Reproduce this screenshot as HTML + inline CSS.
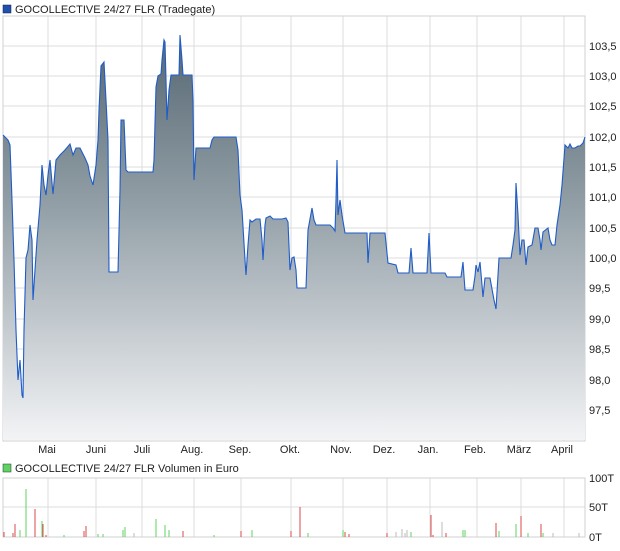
<!DOCTYPE html>
<html><head><meta charset="utf-8"><style>
body{margin:0;background:#fff;width:620px;height:546px;overflow:hidden;font-family:"Liberation Sans",sans-serif}
</style></head><body>
<svg width="620" height="546" viewBox="0 0 620 546" xmlns="http://www.w3.org/2000/svg" font-family="Liberation Sans, sans-serif" font-size="11" fill="#222">
<defs>
<linearGradient id="g" gradientUnits="userSpaceOnUse" x1="0" y1="35" x2="0" y2="441">
<stop offset="0" stop-color="#566772"/>
<stop offset="0.4" stop-color="#8f9ca4"/>
<stop offset="1" stop-color="#f3f4f6"/>
</linearGradient>
</defs>
<rect x="3" y="5" width="8" height="8" fill="#1f4fb0" stroke="#123" stroke-width="0.5"/>
<text x="15" y="13">GOCOLLECTIVE 24/27 FLR (Tradegate)</text>
<g stroke="#dcdcdc" stroke-width="1">
<line x1="48" y1="16" x2="48" y2="441"/><line x1="96" y1="16" x2="96" y2="441"/><line x1="142" y1="16" x2="142" y2="441"/><line x1="194" y1="16" x2="194" y2="441"/><line x1="241" y1="16" x2="241" y2="441"/><line x1="291" y1="16" x2="291" y2="441"/><line x1="343" y1="16" x2="343" y2="441"/><line x1="387" y1="16" x2="387" y2="441"/><line x1="430" y1="16" x2="430" y2="441"/><line x1="477" y1="16" x2="477" y2="441"/><line x1="521" y1="16" x2="521" y2="441"/><line x1="564" y1="16" x2="564" y2="441"/>
<line x1="3" y1="46" x2="585" y2="46"/><line x1="3" y1="76" x2="585" y2="76"/><line x1="3" y1="106" x2="585" y2="106"/><line x1="3" y1="137" x2="585" y2="137"/><line x1="3" y1="167" x2="585" y2="167"/><line x1="3" y1="197" x2="585" y2="197"/><line x1="3" y1="228" x2="585" y2="228"/><line x1="3" y1="258" x2="585" y2="258"/><line x1="3" y1="288" x2="585" y2="288"/><line x1="3" y1="319" x2="585" y2="319"/><line x1="3" y1="349" x2="585" y2="349"/><line x1="3" y1="380" x2="585" y2="380"/><line x1="3" y1="410" x2="585" y2="410"/>
</g>
<rect x="3" y="16" width="582" height="425" fill="none" stroke="#d0d0d0"/>
<path d="M3,135 L8,140 L10,145 L12,200 L14,260 L16,330 L18,380 L20,360 L22,395 L23,398 L24,330 L26,258 L28,250 L30,225 L32,240 L33,300 L35,270 L37,240 L40,205 L42,165 L44,185 L46,195 L48,175 L50,160 L53,194 L56,160 L60,155 L65,150 L70,144 L73,155 L76,148 L80,148 L85,158 L88,165 L90,176 L93,185 L96,165 L98,140 L99,110 L101,66 L104,62 L106,100 L108,140 L109,272 L118,272 L120,190 L121,120 L124,120 L126,170 L128,172 L153,172 L154,160 L156,87 L158,76 L161,74 L162,60 L164,40 L165,42 L166,80 L167,120 L169,90 L171,75 L179,75 L180,35 L182,60 L183,75 L192,75 L193,101 L194,180 L196,148 L210,148 L212,140 L214,137 L236,137 L238,150 L240,195 L242,210 L245,260 L246,275 L248,245 L250,220 L252,222 L256,219 L260,219 L262,240 L263,260 L265,225 L266,218 L270,216 L273,219 L282,219 L286,218 L288,222 L290,270 L292,258 L294,257 L296,270 L297,288 L306,288 L308,230 L312,208 L314,220 L316,225 L330,225 L333,228 L335,231 L336,200 L337,160 L338,215 L340,200 L342,215 L345,233 L367,233 L368,263 L370,233 L385,233 L388,263 L396,265 L398,273 L409,273 L411,248 L413,273 L427,273 L429,233 L431,273 L445,273 L447,277 L461,277 L463,262 L465,290 L473,290 L475,276 L476,265 L478,272 L480,262 L482,285 L483,297 L485,278 L490,278 L494,300 L496,309 L499,258 L511,258 L513,245 L515,230 L516,183 L518,215 L520,255 L522,240 L524,240 L526,265 L528,247 L532,245 L535,228 L538,228 L540,240 L541,250 L543,232 L548,228 L550,240 L552,245 L555,245 L557,225 L560,205 L562,185 L565,145 L568,148 L570,144 L572,148 L575,148 L578,146 L580,146 L583,143 L585,137 L585,440 L3,440 Z" fill="url(#g)" stroke="none"/>
<path d="M3,135 L8,140 L10,145 L12,200 L14,260 L16,330 L18,380 L20,360 L22,395 L23,398 L24,330 L26,258 L28,250 L30,225 L32,240 L33,300 L35,270 L37,240 L40,205 L42,165 L44,185 L46,195 L48,175 L50,160 L53,194 L56,160 L60,155 L65,150 L70,144 L73,155 L76,148 L80,148 L85,158 L88,165 L90,176 L93,185 L96,165 L98,140 L99,110 L101,66 L104,62 L106,100 L108,140 L109,272 L118,272 L120,190 L121,120 L124,120 L126,170 L128,172 L153,172 L154,160 L156,87 L158,76 L161,74 L162,60 L164,40 L165,42 L166,80 L167,120 L169,90 L171,75 L179,75 L180,35 L182,60 L183,75 L192,75 L193,101 L194,180 L196,148 L210,148 L212,140 L214,137 L236,137 L238,150 L240,195 L242,210 L245,260 L246,275 L248,245 L250,220 L252,222 L256,219 L260,219 L262,240 L263,260 L265,225 L266,218 L270,216 L273,219 L282,219 L286,218 L288,222 L290,270 L292,258 L294,257 L296,270 L297,288 L306,288 L308,230 L312,208 L314,220 L316,225 L330,225 L333,228 L335,231 L336,200 L337,160 L338,215 L340,200 L342,215 L345,233 L367,233 L368,263 L370,233 L385,233 L388,263 L396,265 L398,273 L409,273 L411,248 L413,273 L427,273 L429,233 L431,273 L445,273 L447,277 L461,277 L463,262 L465,290 L473,290 L475,276 L476,265 L478,272 L480,262 L482,285 L483,297 L485,278 L490,278 L494,300 L496,309 L499,258 L511,258 L513,245 L515,230 L516,183 L518,215 L520,255 L522,240 L524,240 L526,265 L528,247 L532,245 L535,228 L538,228 L540,240 L541,250 L543,232 L548,228 L550,240 L552,245 L555,245 L557,225 L560,205 L562,185 L565,145 L568,148 L570,144 L572,148 L575,148 L578,146 L580,146 L583,143 L585,137" fill="none" stroke="#1f5cc8" stroke-width="1.1"/>
<g text-anchor="start">
<text x="589" y="50">103,5</text><text x="589" y="80">103,0</text><text x="589" y="110">102,5</text><text x="589" y="141">102,0</text><text x="589" y="171">101,5</text><text x="589" y="201">101,0</text><text x="589" y="232">100,5</text><text x="589" y="262">100,0</text><text x="589" y="292">99,5</text><text x="589" y="323">99,0</text><text x="589" y="353">98,5</text><text x="589" y="384">98,0</text><text x="589" y="414">97,5</text>
</g>
<g text-anchor="middle">
<text x="47" y="453">Mai</text><text x="96" y="453">Juni</text><text x="142" y="453">Juli</text><text x="192" y="453">Aug.</text><text x="240" y="453">Sep.</text><text x="290" y="453">Okt.</text><text x="341" y="453">Nov.</text><text x="384" y="453">Dez.</text><text x="428" y="453">Jan.</text><text x="475" y="453">Feb.</text><text x="519" y="453">März</text><text x="562" y="453">April</text>
</g>
<rect x="3" y="464" width="8" height="8" fill="#5fd35f" stroke="#234" stroke-width="0.5"/>
<text x="15" y="472">GOCOLLECTIVE 24/27 FLR Volumen in Euro</text>
<g stroke="#dcdcdc">
<line x1="48" y1="478" x2="48" y2="537"/><line x1="96" y1="478" x2="96" y2="537"/><line x1="142" y1="478" x2="142" y2="537"/><line x1="194" y1="478" x2="194" y2="537"/><line x1="241" y1="478" x2="241" y2="537"/><line x1="291" y1="478" x2="291" y2="537"/><line x1="343" y1="478" x2="343" y2="537"/><line x1="387" y1="478" x2="387" y2="537"/><line x1="430" y1="478" x2="430" y2="537"/><line x1="477" y1="478" x2="477" y2="537"/><line x1="521" y1="478" x2="521" y2="537"/><line x1="564" y1="478" x2="564" y2="537"/>
<line x1="3" y1="507" x2="585" y2="507"/>
</g>
<rect x="3" y="478" width="582" height="59" fill="none" stroke="#d0d0d0"/>
<g stroke-width="1">
<g stroke="#d94a4a"><line x1="4" y1="537" x2="4" y2="532"/><line x1="13" y1="537" x2="13" y2="533"/><line x1="15" y1="537" x2="15" y2="524"/><line x1="35" y1="537" x2="35" y2="509"/><line x1="43" y1="537" x2="43" y2="524"/><line x1="46" y1="537" x2="46" y2="535"/><line x1="84" y1="537" x2="84" y2="531"/><line x1="86" y1="537" x2="86" y2="526"/><line x1="183" y1="537" x2="183" y2="531"/><line x1="241" y1="537" x2="241" y2="531"/><line x1="291" y1="537" x2="291" y2="531"/><line x1="300" y1="537" x2="300" y2="507"/><line x1="345" y1="537" x2="345" y2="532"/><line x1="349" y1="537" x2="349" y2="534"/><line x1="387" y1="537" x2="387" y2="533"/><line x1="431" y1="537" x2="431" y2="515"/><line x1="433" y1="537" x2="433" y2="535"/><line x1="446" y1="537" x2="446" y2="533"/><line x1="465" y1="537" x2="465" y2="531"/><line x1="496" y1="537" x2="496" y2="523"/><line x1="521" y1="537" x2="521" y2="516"/><line x1="541" y1="537" x2="541" y2="524"/></g>
<g stroke="#5fd35f"><line x1="20" y1="537" x2="20" y2="530"/><line x1="26" y1="537" x2="26" y2="489"/><line x1="42" y1="537" x2="42" y2="521"/><line x1="64" y1="537" x2="64" y2="535"/><line x1="98" y1="537" x2="98" y2="534"/><line x1="103" y1="537" x2="103" y2="534"/><line x1="123" y1="537" x2="123" y2="530"/><line x1="125" y1="537" x2="125" y2="527"/><line x1="156" y1="537" x2="156" y2="519"/><line x1="165" y1="537" x2="165" y2="525"/><line x1="169" y1="537" x2="169" y2="530"/><line x1="214" y1="537" x2="214" y2="535"/><line x1="252" y1="537" x2="252" y2="530"/><line x1="308" y1="537" x2="308" y2="533"/><line x1="343" y1="537" x2="343" y2="530"/><line x1="411" y1="537" x2="411" y2="532"/><line x1="463" y1="537" x2="463" y2="530"/><line x1="465" y1="537" x2="465" y2="530"/><line x1="499" y1="537" x2="499" y2="531"/><line x1="516" y1="537" x2="516" y2="524"/><line x1="528" y1="537" x2="528" y2="533"/><line x1="543" y1="537" x2="543" y2="533"/></g>
<g stroke="#bbb"><line x1="134" y1="537" x2="134" y2="533"/><line x1="396" y1="537" x2="396" y2="532"/><line x1="402" y1="537" x2="402" y2="529"/><line x1="405" y1="537" x2="405" y2="533"/><line x1="407" y1="537" x2="407" y2="530"/><line x1="442" y1="537" x2="442" y2="522"/><line x1="553" y1="537" x2="553" y2="533"/><line x1="579" y1="537" x2="579" y2="533"/></g>
</g>
<text x="589" y="482">100T</text><text x="589" y="511">50T</text><text x="589" y="541">0T</text>
</svg>
</body></html>
